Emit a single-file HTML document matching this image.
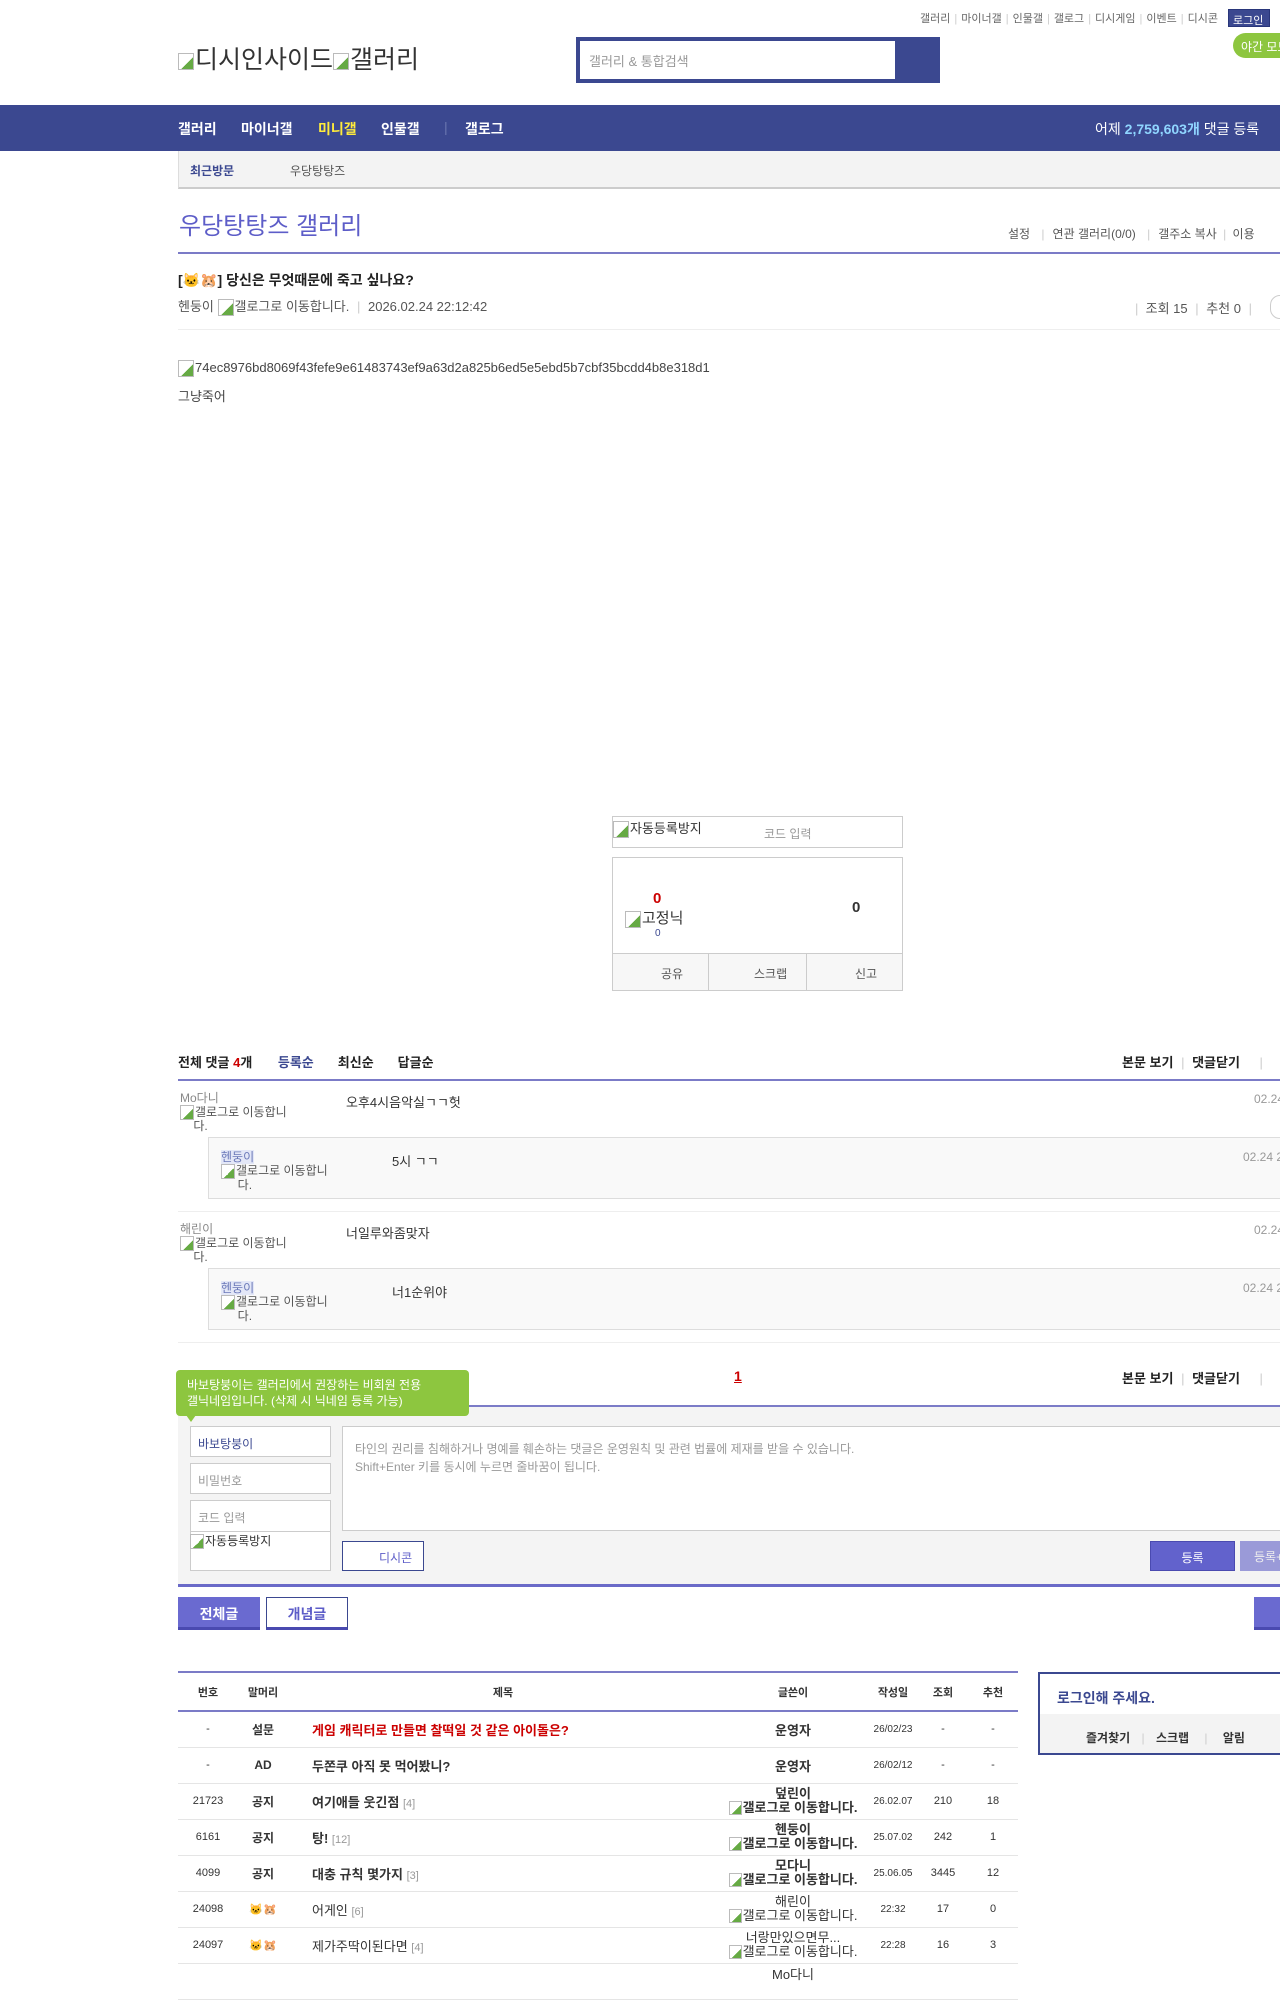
<!DOCTYPE html>
<html><head><meta charset="utf-8"><style>
*{margin:0;padding:0;box-sizing:border-box}
body{width:1280px;height:1960px;overflow:hidden;background:#fff;font-family:"Liberation Sans","Noto Sans CJK KR",sans-serif;font-size:13px;color:#333;position:relative}
.a{position:absolute;white-space:nowrap}
.b{font-weight:bold}
.ib{display:inline-block;width:16px;height:17px;border:1px solid #bbb;vertical-align:middle;margin-right:1px;background:linear-gradient(135deg,#fff 60%,#6a4 60%)}
.tl span{color:#ccc;margin:0 4px}
.nav{position:absolute;left:0;top:105px;width:1280px;height:46px;background:#3b4890}
.nav .a{color:#fff;font-weight:bold;font-size:14px;top:14px}
td{text-align:center;font-size:11px;color:#333;height:36px;border-bottom:1px solid #e5e5e5}
</style></head><body>
<div class="a tl" style="right:62px;top:10px;font-size:11px;color:#666">갤러리<span>|</span>마이너갤<span>|</span>인물갤<span>|</span>갤로그<span>|</span>디시게임<span>|</span>이벤트<span>|</span>디시콘</div>
<div class="a" style="left:1228px;top:9px;width:42px;height:18px;background:#3b4890;color:#fff;font-size:11px;padding:2px 4px;border:1px solid #29367a">로그인</div>
<div class="a" style="left:1233px;top:33px;width:60px;height:25px;background:#8dc63f;border-radius:13px;color:#fff;font-size:12px;padding:5px 8px">야간 모드</div>
<div class="a" style="left:178px;top:40px;font-size:25px;color:#333"><span class="ib"></span>디시인사이드<span class="ib"></span>갤러리</div>
<div class="a" style="left:576px;top:37px;width:364px;height:46px;background:#3b4890"></div>
<div class="a" style="left:580px;top:41px;width:315px;height:38px;background:#fff;color:#999;font-size:13px;padding:10px 9px">갤러리 &amp; 통합검색</div>
<div class="nav">
<div class="a" style="left:178px">갤러리</div><div class="a" style="left:241px">마이너갤</div><div class="a" style="left:318px;color:#ffeb3b">미니갤</div><div class="a" style="left:381px">인물갤</div><div class="a" style="left:444px;color:#6a75b0;font-weight:normal">|</div><div class="a" style="left:465px">갤로그</div>
<div class="a" style="left:1095px;font-weight:normal">어제 <b style="color:#8fd5ff">2,759,603개</b> 댓글 등록</div>
</div>
<div class="a" style="left:178px;top:151px;width:1110px;height:38px;background:#f3f3f3;border-left:1px solid #ddd;border-bottom:2px solid #ccc"></div>
<div class="a b" style="left:190px;top:162px;font-size:12px;color:#3b4890">최근방문</div>
<div class="a" style="left:290px;top:162px;font-size:12px;color:#555">우당탕탕즈</div>
<div class="a" style="left:179px;top:206px;font-size:24px;color:#5d5dc8">우당탕탕즈 갤러리</div>
<div class="a" style="left:1008px;top:225px;font-size:12px;color:#555">설정 <span style="color:#ccc;margin:0 8px">|</span>연관 갤러리(0/0) <span style="color:#ccc;margin:0 8px">|</span>갤주소 복사 <span style="color:#ccc;margin:0 3px">|</span> 이용</div>
<div class="a" style="left:178px;top:252px;width:1110px;height:2px;background:#7b7bc7"></div>
<div class="a b" style="left:178px;top:270px;font-size:14px;color:#222">[<span style="color:#e8a000">🐱</span><span style="color:#e77">🐹</span>] 당신은 무엇때문에 죽고 싶나요?</div>
<div class="a" style="left:178px;top:296px;font-size:13px;color:#555">헨둥이 <span class="ib"></span>갤로그로 이동합니다. <span style="color:#ccc;margin:0 4px">|</span> 2026.02.24 22:12:42</div>
<div class="a" style="left:1135px;top:298px;font-size:13px;color:#555"><span style="color:#ccc">|</span>&nbsp; 조회 15 <span style="color:#ccc;margin:0 4px">|</span> 추천 0 <span style="color:#ccc;margin:0 4px">|</span></div>
<div class="a" style="left:1270px;top:295px;width:20px;height:24px;border:1px solid #ccc;border-radius:12px"></div>
<div class="a" style="left:178px;top:329px;width:1110px;height:1px;background:#eee"></div>
<div class="a" style="left:178px;top:360px;font-size:13px;color:#444"><span class="ib"></span>74ec8976bd8069f43fefe9e61483743ef9a63d2a825b6ed5e5ebd5b7cbf35bcdd4b8e318d1</div>
<div class="a" style="left:178px;top:386px;font-size:13px;color:#444">그냥죽어</div>
<div class="a" style="left:612px;top:816px;width:291px;height:32px;border:1px solid #ccc"></div>
<div class="a" style="left:613px;top:818px;font-size:13px;color:#333"><span class="ib"></span>자동등록방지</div>
<div class="a" style="left:764px;top:825px;font-size:12px;color:#999">코드 입력</div>
<div class="a" style="left:612px;top:857px;width:291px;height:134px;border:1px solid #ccc"></div>
<div class="a" style="left:612px;top:953px;width:291px;height:38px;background:#f7f7f7;border:1px solid #ccc"></div>
<div class="a" style="left:708px;top:954px;width:1px;height:36px;background:#ccc"></div>
<div class="a" style="left:806px;top:954px;width:1px;height:36px;background:#ccc"></div>
<div class="a" style="left:661px;top:965px;font-size:12px;color:#555">공유</div>
<div class="a" style="left:754px;top:965px;font-size:12px;color:#555">스크랩</div>
<div class="a" style="left:855px;top:965px;font-size:12px;color:#555">신고</div>
<div class="a b" style="left:653px;top:890px;font-size:15px;color:#c00">0</div>
<div class="a" style="left:625px;top:907px;font-size:15px;color:#333"><span class="ib"></span>고정닉</div>
<div class="a" style="left:655px;top:928px;font-size:10px;color:#3b4890">0</div>
<div class="a b" style="left:852px;top:899px;font-size:15px;color:#333">0</div>
<div class="a b" style="left:178px;top:1052px;font-size:13px;color:#222">전체 댓글 <span style="color:#c00">4</span>개 <span style="color:#3b4890;margin-left:22px">등록순</span><span style="margin-left:24px">최신순</span><span style="margin-left:24px">답글순</span></div>
<div class="a b" style="left:1122px;top:1052px;font-size:13px;color:#222">본문 보기 <span style="color:#ccc;font-weight:normal;margin:0 4px">|</span> 댓글닫기 <span style="color:#ccc;font-weight:normal;margin-left:16px">|</span></div>
<div class="a" style="left:178px;top:1079px;width:1110px;height:2px;background:#7b7bc7"></div>
<div class="a" style="left:180px;top:1092px;font-size:12px;color:#888;line-height:13px">Mo다니<br><span style="color:#555"><span class="ib" style="width:14px;height:15px"></span>갤로그로 이동합니<br>&nbsp;&nbsp;&nbsp;&nbsp;다.</span></div>
<div class="a" style="left:346px;top:1092px;color:#333">오후4시음악실ㄱㄱ헛</div>
<div class="a" style="left:1254px;top:1092px;font-size:12px;color:#999">02.24</div>
<div class="a" style="left:208px;top:1137px;width:1080px;height:62px;background:#f9f9f9;border:1px solid #ddd"></div>
<div class="a" style="left:221px;top:1151px;font-size:12px;color:#555;line-height:13px"><span style="background:#e3e7f7;color:#6a78b8">헨둥이</span><br><span class="ib" style="width:14px;height:15px"></span>갤로그로 이동합니<br>&nbsp;&nbsp;&nbsp;&nbsp;&nbsp;다.</div>
<div class="a" style="left:392px;top:1151px;color:#333">5시 ㄱㄱ</div>
<div class="a" style="left:1243px;top:1150px;font-size:12px;color:#999">02.24 22</div>
<div class="a" style="left:178px;top:1211px;width:1110px;height:1px;background:#eee"></div>
<div class="a" style="left:180px;top:1223px;font-size:12px;color:#888;line-height:13px">해린이<br><span style="color:#555"><span class="ib" style="width:14px;height:15px"></span>갤로그로 이동합니<br>&nbsp;&nbsp;&nbsp;&nbsp;다.</span></div>
<div class="a" style="left:346px;top:1223px;color:#333">너일루와좀맞자</div>
<div class="a" style="left:1254px;top:1223px;font-size:12px;color:#999">02.24</div>
<div class="a" style="left:208px;top:1268px;width:1080px;height:62px;background:#f9f9f9;border:1px solid #ddd"></div>
<div class="a" style="left:221px;top:1282px;font-size:12px;color:#555;line-height:13px"><span style="background:#e3e7f7;color:#6a78b8">헨둥이</span><br><span class="ib" style="width:14px;height:15px"></span>갤로그로 이동합니<br>&nbsp;&nbsp;&nbsp;&nbsp;&nbsp;다.</div>
<div class="a" style="left:392px;top:1282px;color:#333">너1순위야</div>
<div class="a" style="left:1243px;top:1281px;font-size:12px;color:#999">02.24 22</div>
<div class="a" style="left:178px;top:1342px;width:1110px;height:1px;background:#eee"></div>
<div class="a b" style="left:734px;top:1368px;font-size:14px;color:#c00;text-decoration:underline">1</div>
<div class="a b" style="left:1122px;top:1368px;font-size:13px;color:#222">본문 보기 <span style="color:#ccc;font-weight:normal;margin:0 4px">|</span> 댓글닫기 <span style="color:#ccc;font-weight:normal;margin-left:16px">|</span></div>
<div class="a" style="left:178px;top:1405px;width:1110px;height:2px;background:#7b7bc7"></div>
<div class="a" style="left:178px;top:1407px;width:1110px;height:178px;background:#f4f4f4"></div>
<div class="a" style="left:176px;top:1370px;width:293px;height:46px;background:#8dc63f;border-radius:4px;color:#fff;font-size:12px;padding:7px 11px;line-height:16px">바보탕붕이는 갤러리에서 권장하는 비회원 전용<br>갤닉네임입니다. (삭제 시 닉네임 등록 가능)</div>
<div class="a" style="left:186px;top:1415px;width:0;height:0;border-left:5px solid transparent;border-right:5px solid transparent;border-top:7px solid #8dc63f"></div>
<div class="a" style="left:190px;top:1426px;width:141px;height:31px;background:#fff;border:1px solid #ccc;font-size:12px;color:#3b4890;padding:8px 7px">바보탕붕이</div>
<div class="a" style="left:190px;top:1463px;width:141px;height:31px;background:#fff;border:1px solid #ccc;font-size:12px;color:#999;padding:8px 7px">비밀번호</div>
<div class="a" style="left:190px;top:1500px;width:141px;height:71px;background:#fff;border:1px solid #ccc;font-size:12px;color:#999;padding:8px 7px">코드 입력</div>
<div class="a" style="left:190px;top:1531px;width:141px;height:1px;background:#ccc"></div>
<div class="a" style="left:190px;top:1532px;font-size:12px;color:#333"><span class="ib" style="width:14px;height:15px"></span>자동등록방지</div>
<div class="a" style="left:342px;top:1426px;width:950px;height:105px;background:#fff;border:1px solid #ccc;font-size:12px;color:#999;padding:13px 12px;line-height:18px">타인의 권리를 침해하거나 명예를 훼손하는 댓글은 운영원칙 및 관련 법률에 제재를 받을 수 있습니다.<br>Shift+Enter 키를 동시에 누르면 줄바꿈이 됩니다.</div>
<div class="a" style="left:342px;top:1541px;width:82px;height:30px;background:#fff;border:1px solid #3b4890;font-size:12px;color:#5d5dc8;padding:7px 0 0 36px">디시콘</div>
<div class="a" style="left:1150px;top:1541px;width:85px;height:30px;background:#6262cc;border:1px solid #4a4ab0;color:#fff;font-size:12px;text-align:center;padding-top:7px">등록</div>
<div class="a" style="left:1240px;top:1541px;width:60px;height:30px;background:#9a9ad8;color:#eee;font-size:12px;padding:7px 0 0 14px">등록+추천</div>
<div class="a" style="left:178px;top:1584px;width:1110px;height:3px;background:#6a6ac8"></div>
<div class="a b" style="left:178px;top:1597px;width:82px;height:33px;background:#6a6ad0;border-bottom:3px solid #4a4ab0;color:#fff;font-size:14px;text-align:center;padding-top:7px">전체글</div>
<div class="a b" style="left:266px;top:1597px;width:82px;height:33px;background:#fff;border:1px solid #3b4890;border-bottom:3px solid #4a4ab0;color:#5d5dc8;font-size:14px;text-align:center;padding-top:6px">개념글</div>
<div class="a" style="left:1254px;top:1597px;width:40px;height:33px;background:#6a6ad0;border-bottom:3px solid #4a4ab0"></div>
<div class="a" style="left:178px;top:1671px;width:840px;height:2px;background:#7b7bc7"></div>
<table class="a" style="left:178px;top:1673px;width:840px;border-collapse:collapse">
<tr><td style="width:60px;height:38px;border-bottom:2px solid #7b7bc7;font-weight:bold">번호</td><td style="width:50px;border-bottom:2px solid #7b7bc7;font-weight:bold">말머리</td><td style="border-bottom:2px solid #7b7bc7;font-weight:bold">제목</td><td style="width:150px;border-bottom:2px solid #7b7bc7;font-weight:bold">글쓴이</td><td style="width:50px;border-bottom:2px solid #7b7bc7;font-weight:bold">작성일</td><td style="width:50px;border-bottom:2px solid #7b7bc7;font-weight:bold">조회</td><td style="width:50px;border-bottom:2px solid #7b7bc7;font-weight:bold">추천</td></tr>
<tr><td style="height:28px">-</td><td class="b" style="font-size:12px">설문</td><td class="b" style="text-align:left;padding-left:24px;color:#c00;font-size:13px">게임 캐릭터로 만들면 찰떡일 것 같은 아이돌은?</td><td class="b" style="font-size:13px">운영자</td><td style="font-size:10px">26/02/23</td><td>-</td><td>-</td></tr>
<tr><td style="height:28px">-</td><td class="b" style="font-size:12px">AD</td><td class="b" style="text-align:left;padding-left:24px;font-size:13px">두쫀쿠 아직 못 먹어봤니?</td><td class="b" style="font-size:13px">운영자</td><td style="font-size:10px">26/02/12</td><td>-</td><td>-</td></tr>
<tr><td>21723</td><td class="b" style="font-size:12px">공지</td><td class="b" style="text-align:left;padding-left:24px;font-size:13px">여기애들 웃긴점 <span style="color:#999;font-weight:normal;font-size:11px">[4]</span></td><td class="b" style="font-size:13px;line-height:14px">덮린이<br><span class="ib" style="width:13px;height:14px"></span>갤로그로 이동합니다.</td><td style="font-size:10px">26.02.07</td><td>210</td><td>18</td></tr>
<tr><td>6161</td><td class="b" style="font-size:12px">공지</td><td class="b" style="text-align:left;padding-left:24px;font-size:13px">탕! <span style="color:#999;font-weight:normal;font-size:11px">[12]</span></td><td class="b" style="font-size:13px;line-height:14px">헨둥이<br><span class="ib" style="width:13px;height:14px"></span>갤로그로 이동합니다.</td><td style="font-size:10px">25.07.02</td><td>242</td><td>1</td></tr>
<tr><td>4099</td><td class="b" style="font-size:12px">공지</td><td class="b" style="text-align:left;padding-left:24px;font-size:13px">대충 규칙 몇가지 <span style="color:#999;font-weight:normal;font-size:11px">[3]</span></td><td class="b" style="font-size:13px;line-height:14px">모다니<br><span class="ib" style="width:13px;height:14px"></span>갤로그로 이동합니다.</td><td style="font-size:10px">25.06.05</td><td>3445</td><td>12</td></tr>
<tr><td>24098</td><td><span style="color:#e8a000">🐱</span><span style="color:#e77">🐹</span></td><td style="text-align:left;padding-left:24px;font-size:13px">어게인 <span style="color:#999;font-size:11px">[6]</span></td><td style="font-size:13px;line-height:14px">해린이<br><span class="ib" style="width:13px;height:14px"></span>갤로그로 이동합니다.</td><td style="font-size:10px">22:32</td><td>17</td><td>0</td></tr>
<tr><td>24097</td><td><span style="color:#e8a000">🐱</span><span style="color:#e77">🐹</span></td><td style="text-align:left;padding-left:24px;font-size:13px">제가주딱이된다면 <span style="color:#999;font-size:11px">[4]</span></td><td style="font-size:13px;line-height:14px">너랑만있으면무...<br><span class="ib" style="width:13px;height:14px"></span>갤로그로 이동합니다.</td><td style="font-size:10px">22:28</td><td>16</td><td>3</td></tr>
<tr><td></td><td></td><td></td><td style="font-size:13px;vertical-align:top">Mo다니</td><td></td><td></td><td></td></tr>
</table>
<div class="a" style="left:1038px;top:1672px;width:250px;height:83px;border:2px solid #3b4890;border-right:none"></div>
<div class="a" style="left:1040px;top:1714px;width:250px;height:39px;background:#f3f3f3"></div>
<div class="a b" style="left:1057px;top:1688px;font-size:14px;color:#3b4890">로그인해 주세요.</div>
<div class="a b" style="left:1086px;top:1729px;font-size:12px;color:#333">즐겨찾기 <span style="color:#ccc;font-weight:normal;margin:0 8px">|</span> 스크랩 <span style="color:#ccc;font-weight:normal;margin:0 12px">|</span> 알림</div>
</body></html>
